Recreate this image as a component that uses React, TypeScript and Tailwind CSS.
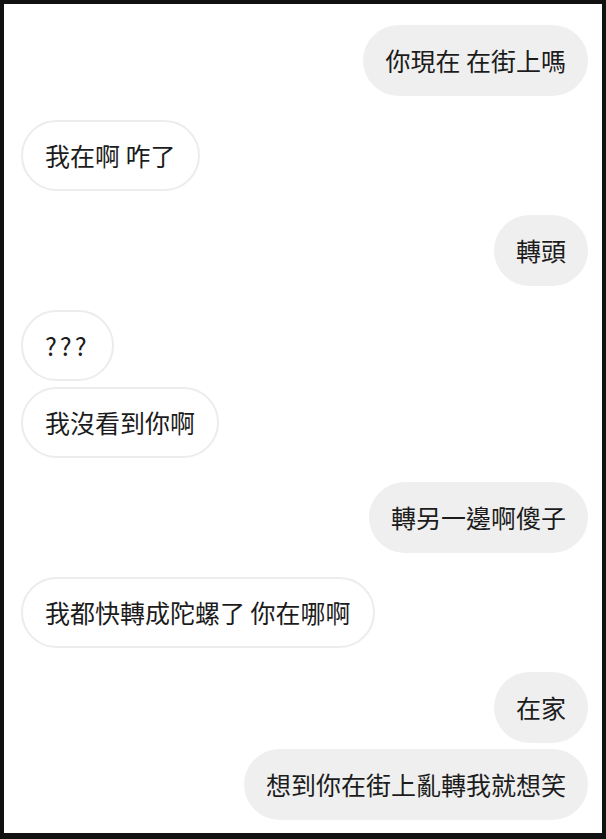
import React from 'react';

type Msg = { text: string; mine: boolean; tight?: boolean };

const messages: Msg[] = [
  { text: '你現在 在街上嗎', mine: true },
  { text: '我在啊 咋了', mine: false },
  { text: '轉頭', mine: true },
  { text: '???', mine: false },
  { text: '我沒看到你啊', mine: false, tight: true },
  { text: '轉另一邊啊傻子', mine: true },
  { text: '我都快轉成陀螺了 你在哪啊', mine: false },
  { text: '在家', mine: true },
  { text: '想到你在街上亂轉我就想笑', mine: true, tight: true },
];

const Bubble = ({ msg }: { msg: Msg }) => (
  <div
    className={`flex ${msg.mine ? 'justify-end' : 'justify-start'} ${
      msg.tight ? 'mt-[6px]' : 'mt-[24px]'
    } first:mt-0`}
  >
    <div
      className={`h-[71px] px-[22px] flex items-center rounded-full text-[25px] text-[#1c1c1c] ${
        msg.mine ? 'bg-[#efefef]' : 'bg-white border-2 border-[#ececec]'
      } ${msg.text === '???' ? 'tracking-[3px]' : ''}`}
    >
      {msg.text}
    </div>
  </div>
);

export default function App() {
  return (
    <div
      className="w-[606px] h-[839px] bg-[#111] pt-[4px] pl-[4px] pr-[4px] pb-[6px]"
      style={{ fontFamily: '"Noto Sans CJK TC", "Noto Sans", sans-serif' }}
    >
      <div className="h-full bg-white pt-[21px] pl-[17px] pr-[14px] flex flex-col">
        {messages.map((m, i) => (
          <Bubble key={i} msg={m} />
        ))}
      </div>
    </div>
  );
}
